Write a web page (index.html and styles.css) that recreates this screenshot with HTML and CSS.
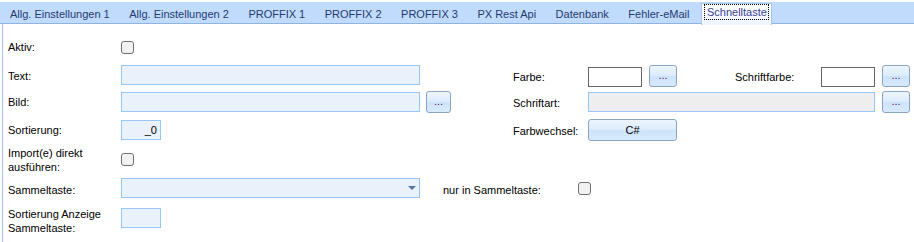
FILE: index.html
```html
<!DOCTYPE html>
<html>
<head>
    <title>Schnelltaste</title>
    <link rel="stylesheet" href="styles.css">
</head>
<body>
    <div class="tabs">
        <span class="tab">Allg. Einstellungen 1</span>
        <span class="tab">Allg. Einstellungen 2</span>
        <span class="tab">PROFFIX 1</span>
        <span class="tab">PROFFIX 2</span>
        <span class="tab">PROFFIX 3</span>
        <span class="tab">PX Rest Api</span>
        <span class="tab">Datenbank</span>
        <span class="tab">Fehler-eMail</span>
        <span class="tab tab-active"><span class="focus">Schnelltaste</span></span>
    </div>

    <div class="panel">
        <div class="row row-aktiv">
            <div class="left">
                <span class="lbl">Aktiv:</span>
                <span class="check"></span>
            </div>
        </div>

        <div class="row row-text">
            <div class="left">
                <span class="lbl">Text:</span>
                <span class="field field-long field-top"></span>
            </div>
            <div class="right">
                <span class="lbl-r">Farbe:</span>
                <span class="color"></span>
                <span class="btn btn-dots">...</span>
                <span class="lbl-r lbl-sf">Schriftfarbe:</span>
                <span class="color"></span>
                <span class="btn btn-dots">...</span>
            </div>
        </div>

        <div class="row row-bild">
            <div class="left">
                <span class="lbl">Bild:</span>
                <span class="field field-long"></span>
                <span class="btn btn-small">...</span>
            </div>
            <div class="right">
                <span class="lbl-r">Schriftart:</span>
                <span class="field field-font"></span>
                <span class="btn btn-dots">...</span>
            </div>
        </div>

        <div class="row row-sort">
            <div class="left">
                <span class="lbl">Sortierung:</span>
                <span class="field field-num">_0</span>
            </div>
            <div class="right">
                <span class="lbl-r">Farbwechsel:</span>
                <span class="btn btn-wide">C#</span>
            </div>
        </div>

        <div class="row row-import">
            <div class="left">
                <span class="lbl lbl-two">Import(e) direkt<br>ausführen:</span>
                <span class="check"></span>
            </div>
        </div>

        <div class="row row-sammel">
            <div class="left left-free">
                <span class="lbl lbl-low">Sammeltaste:</span>
                <span class="field field-long combo"><span class="arrow"></span></span>
                <span class="lbl-nur">nur in Sammeltaste:</span>
                <span class="check"></span>
            </div>
        </div>

        <div class="row row-anzeige">
            <div class="left">
                <span class="lbl lbl-two">Sortierung Anzeige<br>Sammeltaste:</span>
                <span class="field field-num"></span>
            </div>
        </div>
    </div>
</body>
</html>
```

FILE: styles.css
```css
* {
    box-sizing: border-box;
}

body {
    margin: 0;
    font-family: "Liberation Sans", Arial, sans-serif;
    font-size: 11px;
    color: #000;
    background: #fff;
}

/* tab strip */
.tabs {
    display: flex;
    margin-top: 2px;
    height: 22px;
    background: #c1dbfc;
    border-bottom: 1px solid #8fb3e2;
}

.tab {
    padding: 3px 9.5px 0 10px;
    line-height: 19px;
    color: #1f3a70;
    white-space: nowrap;
}

.tab-active {
    margin: 1px 0 0 2px;
    height: 22px;
    padding: 0 2px;
    line-height: 13px;
    background: linear-gradient(#ffffff, #eef5fe);
    border: 1px solid #a9c6ec;
    border-bottom: none;
    color: #3a3f98;
}

.focus {
    display: inline-block;
    padding: 1px 1px 0 2px;
    border: 1px dotted #000;
}

/* form panel */
.panel {
    margin-left: 2px;
    height: 218px;
    border-left: 1px solid #a3c3ea;
    padding: 13px 0 0 5px;
}

.row {
    display: flex;
    align-items: center;
    height: 22px;
}

.row-aktiv { height: 20px; }
.row-text { margin-top: 8px; }
.row-bild { margin-top: 4px; }
.row-sort { margin-top: 6px; }
.row-import { margin-top: 4px; height: 28px; }
.row-sammel { margin-top: 4px; }
.row-anzeige { margin-top: 7px; height: 28px; align-items: flex-start; }

.left {
    display: flex;
    align-items: center;
    width: 505px;
    height: 100%;
}

.left-free {
    width: auto;
}

.row-anzeige .left {
    align-items: flex-start;
}

.right {
    display: flex;
    align-items: center;
    height: 100%;
}

.lbl {
    width: 113px;
    flex: none;
}

.lbl-two {
    line-height: 14px;
    padding-top: 1px;
}

.row-anzeige .field-num {
    margin-top: 2px;
}

.lbl-low {
    padding-top: 4px;
}

.lbl-r {
    width: 75px;
    flex: none;
    padding-top: 2px;
}

.lbl-sf {
    width: 86px;
    margin-left: 58px;
}

.lbl-nur {
    width: 135px;
    flex: none;
    margin-left: 23px;
    padding-top: 4px;
    white-space: nowrap;
}

/* inputs */
.check {
    width: 13px;
    height: 13px;
    flex: none;
    border: 1px solid #707070;
    border-radius: 3px;
    background: #f2f2f2;
}

.field {
    height: 20px;
    flex: none;
    border: 1px solid #98c6f6;
    background: #e9f1fb;
}

.field-top {
    align-self: flex-start;
}

.field-long {
    width: 299px;
}

.field-num {
    width: 40px;
    padding-right: 3px;
    line-height: 18px;
    text-align: right;
}

.field-font {
    width: 287px;
    background: #eeeeee;
}

.combo {
    display: flex;
    align-items: center;
    justify-content: flex-end;
    padding-right: 3px;
}

.arrow {
    width: 0;
    height: 0;
    border-left: 4px solid transparent;
    border-right: 4px solid transparent;
    border-top: 4px solid #56779f;
}

.color {
    width: 54px;
    height: 20px;
    flex: none;
    border: 1px solid #646464;
    background: #fff;
    margin-top: 2px;
}

.btn {
    display: flex;
    align-items: center;
    justify-content: center;
    flex: none;
    height: 22px;
    border: 1px solid #8aa4c8;
    border-radius: 3px;
    background: linear-gradient(#edf5fe, #dcecfd 48%, #cde3fb 52%, #d8eafd);
    color: #000;
    line-height: 20px;
}

.btn-dots {
    width: 28px;
    margin-left: 7px;
    color: #4a1458;
    padding-bottom: 2px;
}

.btn-small {
    width: 25px;
    margin-left: 6px;
    color: #4a1458;
    padding-bottom: 2px;
}

.btn-wide {
    width: 89px;
}
```
